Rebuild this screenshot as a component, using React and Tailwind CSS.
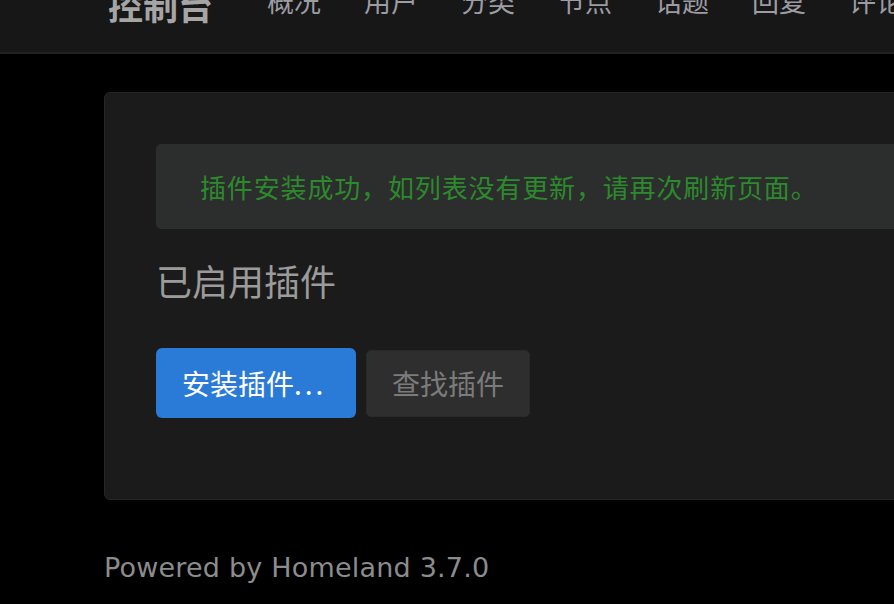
export default function App() {
  const nav = ["概况", "用户", "分类", "节点", "话题", "回复", "评论"]

  return (
    <div className="min-h-screen w-full overflow-hidden bg-black font-['Noto_Sans_CJK_SC',sans-serif]">
      <header className="flow-root h-[54px] w-full border-b-2 border-[#222222] bg-[#171717]">
        <div className="-mt-[13px] flex items-start pl-[108px] whitespace-nowrap">
          <a className="text-[35px] font-bold leading-none text-[#a5a5a5]">控制台</a>
          <nav className="ml-[54px] flex gap-[43px]">
            {nav.map((item) => (
              <a key={item} className="text-[27px] leading-none text-[#9c9ca3]">
                {item}
              </a>
            ))}
          </nav>
        </div>
      </header>

      <main className="pl-[104px] pt-[38px]">
        <div className="w-[1000px] rounded-[6px] border border-[#262626] bg-[#1b1b1b] pl-[51px] pt-[51px] pb-[81px]">
          <div className="flex h-[85px] items-center rounded-[5px] bg-[#2c2d2d] pl-[44px] text-[26px] leading-none tracking-[0.85px] text-[#2c8a2c]">
            插件安装成功，如列表没有更新，请再次刷新页面。
          </div>

          <h2 className="mt-[31px] text-[36px] leading-[40px] font-normal text-[#9b9b9b]">已启用插件</h2>

          <div className="mt-[48px] flex items-center gap-[10px]">
            <button className="h-[70px] w-[200px] rounded-[6px] bg-[#2a7ad8] pl-[26px] text-left text-[28px] leading-none text-white">
              安装插件<span className="tracking-[3px]">...</span>
            </button>
            <button className="h-[67px] rounded-[5px] border border-[#2a2a2a] bg-[#2e2e2e] px-[25px] text-[28px] leading-none text-[#7b7b7b]">
              查找插件
            </button>
          </div>
        </div>

        <footer className="mt-[54px] font-['DejaVu_Sans',sans-serif] text-[27px] leading-none tracking-[0.2px] text-[#8c8c8c]">
          Powered by Homeland 3.7.0
        </footer>
      </main>
    </div>
  )
}
